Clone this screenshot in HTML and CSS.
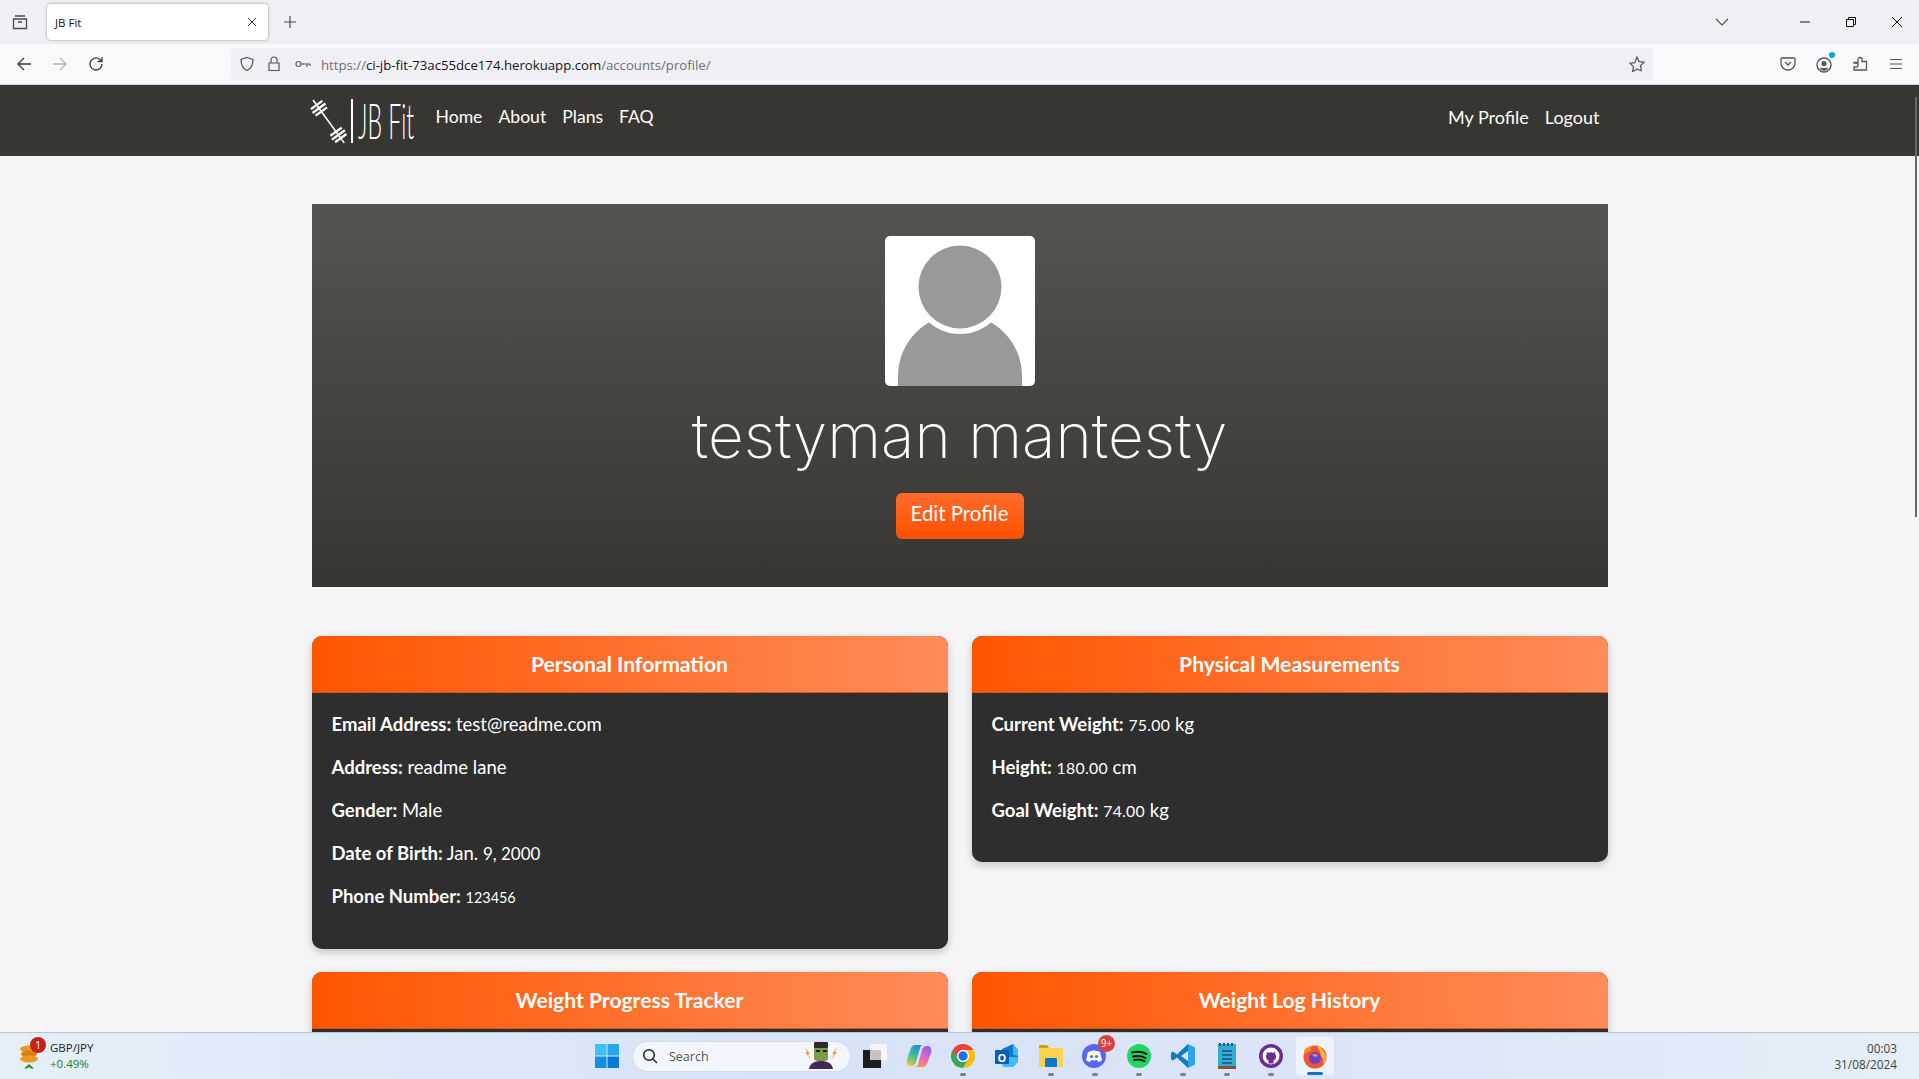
FILE: index.html
```html
<!DOCTYPE html>
<html>
<head>
  <title>JB Fit</title>
  <link rel="stylesheet" href="styles.css">
</head>
<body>
  <!-- Browser tabs -->
  <div class="tabbar">
    <svg class="tab-list" width="16" height="16" viewBox="0 0 16 16" fill="none" stroke="#4a4a4f" stroke-width="1.3"><path d="M3 2h10M1.500 5h13v9.500h-13zM6 8h4"/></svg>
    <div class="tab">
      <span class="tab-title">JB Fit</span>
      <svg width="10" height="10" viewBox="0 0 10 10" stroke="#333" stroke-width="1"><path d="M1 1l8 8M9 1l-8 8"/></svg>
    </div>
    <svg class="tab-new" width="14" height="14" viewBox="0 0 14 14" stroke="#4a4a4f" stroke-width="1.2"><path d="M7 1v12M1 7h12"/></svg>
    <svg class="tab-down" width="14" height="8" viewBox="0 0 14 8" fill="none" stroke="#4a4a4f" stroke-width="1.1"><path d="M1 1l6 6 6-6"/></svg>
    <div class="window-btns">
      <svg width="12" height="12" viewBox="0 0 12 12" stroke="#111" stroke-width="1"><path d="M1 6h10"/></svg>
      <svg width="12" height="12" viewBox="0 0 12 12" fill="none" stroke="#111" stroke-width="1"><path d="M1.500 3.500h7v7h-7zM3.500 3.500v-2h7v7h-2"/></svg>
      <svg width="12" height="12" viewBox="0 0 12 12" stroke="#111" stroke-width="1"><path d="M1 1l10 10M11 1L1 11"/></svg>
    </div>
  </div>

  <!-- Browser toolbar -->
  <div class="toolbar">
    <div class="nav-btns">
      <svg width="16" height="16" viewBox="0 0 16 16" fill="none" stroke="#3a3a3f" stroke-width="1.3"><path d="M15 8H2M8 2L2 8l6 6"/></svg>
      <svg width="16" height="16" viewBox="0 0 16 16" fill="none" stroke="#b4b4b8" stroke-width="1.3"><path d="M1 8h13M8 2l6 6-6 6"/></svg>
      <svg width="16" height="16" viewBox="0 0 16 16" fill="none" stroke="#3a3a3f" stroke-width="1.3"><path d="M14 8a6 6 0 1 1-2-4.500L14 5.500M14 1v4.500H9.500"/></svg>
    </div>
    <div class="urlbar">
      <svg width="16" height="16" viewBox="0 0 16 16" fill="none" stroke="#55555a" stroke-width="1.2"><path d="M8 1.500l6 2c0 5-1.500 9-6 11-4.500-2-6-6-6-11z"/></svg>
      <svg width="14" height="16" viewBox="0 0 14 16" fill="none" stroke="#55555a" stroke-width="1.2"><path d="M2 7h10v7.500H2zM4 7V4a3 3 0 0 1 6 0v3"/></svg>
      <svg class="key" width="16" height="10" viewBox="0 0 16 10" fill="none" stroke="#55555a" stroke-width="1.1"><circle cx="3.500" cy="5" r="2.500"/><path d="M6 5h9M12 5v3M15 5v2"/></svg>
      <span class="url"><span class="url-dim">https://</span>ci-jb-fit-73ac55dce174.herokuapp.com<span class="url-dim">/accounts/profile/</span></span>
      <svg class="star" width="16" height="16" viewBox="0 0 16 16" fill="none" stroke="#55555a" stroke-width="1.2"><path d="M8 1l2.100 4.600 5 .6-3.700 3.400 1 4.900L8 13.100 3.600 15.500l1-4.900L.9 7.200l5-.6z"/></svg>
    </div>
    <div class="tool-icons">
      <svg width="16" height="16" viewBox="0 0 16 16" fill="none" stroke="#55555a" stroke-width="1.3"><path d="M2 2h12a1 1 0 0 1 1 1v4a7 7 0 0 1-14 0V3a1 1 0 0 1 1-1zM5 6l3 3 3-3"/></svg>
      <span class="account-icon">
        <svg width="16" height="16" viewBox="0 0 16 16"><circle cx="8" cy="8" r="7" fill="none" stroke="#55555a" stroke-width="1.400"/><circle cx="8" cy="6.500" r="2.600" fill="#55555a"/><path d="M3.500 11h9a5 5 0 0 1-9 0z" fill="#55555a"/></svg>
        <span class="account-dot"></span>
      </span>
      <svg width="16" height="16" viewBox="0 0 16 16" fill="none" stroke="#55555a" stroke-width="1.3"><path d="M2 7h4V4a2 2 0 0 1 4 0v2h4.500v8.500H2v-3h2a2 2 0 0 0 0-4H2z" transform="translate(0 -.5)"/></svg>
      <svg width="16" height="16" viewBox="0 0 16 16" stroke="#55555a" stroke-width="1.2"><path d="M2 3.500h12M2 8h12M2 12.500h12"/></svg>
    </div>
  </div>

  <div class="page">
    <nav class="site-nav">
      <div class="site-nav-inner">
        <a class="brand" href="#">
          <svg class="brand-logo" width="104" height="50" viewBox="0 0 104 50">
            <g fill="#fff">
              <g transform="translate(1 4) rotate(54)">
                <rect x="0" y="-.8" width="53" height="1.600"/>
                <rect x="5" y="-7" width="2.400" height="14"/>
                <rect x="9" y="-8" width="2.400" height="16"/>
                <rect x="13" y="-7" width="2.400" height="14"/>
                <rect x="38" y="-7" width="2.400" height="14"/>
                <rect x="42" y="-8" width="2.400" height="16"/>
                <rect x="46" y="-7" width="2.400" height="14"/>
              </g>
              <rect x="39" y="3" width="2" height="44"/>
              <text class="brand-text" transform="translate(46 43) scale(.46 1)">JB Fit</text>
            </g>
          </svg>
        </a>
        <ul class="nav-links">
          <li><a href="#">Home</a></li>
          <li><a href="#">About</a></li>
          <li><a href="#">Plans</a></li>
          <li><a href="#">FAQ</a></li>
        </ul>
        <ul class="nav-links nav-right">
          <li><a href="#">My Profile</a></li>
          <li><a href="#">Logout</a></li>
        </ul>
      </div>
    </nav>

    <main class="container">
      <section class="hero">
        <div class="avatar">
          <svg width="150" height="150" viewBox="0 0 150 150">
            <path d="M13 150v-10a62 62 0 0 1 124 0v10z" fill="#999"/>
            <circle cx="75" cy="51" r="47" fill="#fff"/>
            <circle cx="75" cy="51" r="41.500" fill="#999"/>
          </svg>
        </div>
        <h1 class="hero-name">testyman mantesty</h1>
        <a class="edit-btn" href="#">Edit Profile</a>
      </section>

      <div class="cards">
        <section class="card">
          <h2 class="card-head">Personal Information</h2>
          <div class="card-body">
            <p><strong>Email Address:</strong> test@readme.com</p>
            <p><strong>Address:</strong> readme lane</p>
            <p><strong>Gender:</strong> Male</p>
            <p><strong>Date of Birth:</strong> Jan. <span class="num-date">9, 2000</span></p>
            <p><strong>Phone Number:</strong> <span class="num-small">123456</span></p>
          </div>
        </section>
        <section class="card">
          <h2 class="card-head">Physical Measurements</h2>
          <div class="card-body">
            <p><strong>Current Weight:</strong> <span class="num">75.00</span> kg</p>
            <p><strong>Height:</strong> <span class="num">180.00</span> cm</p>
            <p><strong>Goal Weight:</strong> <span class="num">74.00</span> kg</p>
          </div>
        </section>
        <section class="card">
          <h2 class="card-head">Weight Progress Tracker</h2>
          <div class="card-body"></div>
        </section>
        <section class="card">
          <h2 class="card-head">Weight Log History</h2>
          <div class="card-body"></div>
        </section>
      </div>
    </main>
    <div class="scroll-thumb"></div>
  </div>

  <!-- Windows taskbar -->
  <footer class="taskbar">
    <div class="widget">
      <svg width="24" height="30" viewBox="0 0 24 30">
        <ellipse cx="11" cy="8" rx="9" ry="3.500" fill="#e8971c"/>
        <ellipse cx="11" cy="13" rx="8" ry="3.500" fill="#d9800f"/>
        <ellipse cx="11" cy="18" rx="9" ry="3.500" fill="#ee9a1e"/>
        <path d="M11 23l5 4.500h-3L11 26l-2 1.500H6z" fill="#2e8b1e"/>
      </svg>
      <span class="widget-badge">1</span>
      <div class="widget-text">
        <span>GBP/JPY</span>
        <span class="widget-up">+0.49%</span>
      </div>
    </div>

    <div class="task-icons">
      <svg class="win-logo" width="24" height="24" viewBox="0 0 24 24">
        <rect x="0" y="0" width="11.500" height="11.500" fill="#3cc0f5"/>
        <rect x="12.500" y="0" width="11.500" height="11.500" fill="#24a8ea"/>
        <rect x="0" y="12.500" width="11.500" height="11.500" fill="#1290e0"/>
        <rect x="12.500" y="12.500" width="11.500" height="11.500" fill="#0a78d4"/>
      </svg>
      <div class="search-box">
        <svg width="16" height="16" viewBox="0 0 16 16" fill="none" stroke="#222" stroke-width="1.500"><circle cx="7" cy="7" r="5.300"/><path d="M11 11l4 4"/></svg>
        <span class="search-label">Search</span>
        <svg class="search-art" width="38" height="28" viewBox="0 0 38 28">
          <path d="M3 6l5 7-2 0 3 6-6-8h2zM35 6l-5 7 2 0-3 6 6-8h-2z" fill="#f2a52a"/>
          <path d="M7 28c1-6 6-8 12-8s11 2 12 8z" fill="#43265c"/>
          <rect x="12" y="5" width="14" height="15" rx="3" fill="#7c9a48"/>
          <rect x="12" y="1" width="14" height="6" rx="1" fill="#2c2c2c"/>
          <rect x="14" y="9" width="4" height="2" fill="#222"/>
          <rect x="21" y="9" width="4" height="2" fill="#222"/>
        </svg>
      </div>
      <div class="task-icon">
        <svg width="26" height="26" viewBox="0 0 26 26"><rect x="8" y="1" width="17" height="16" fill="#f6f6f6"/><rect x="8" y="7" width="11" height="10" fill="#c4c4c4"/><path d="M1 7h7v10h11v8H1z" fill="#1c1c1c"/></svg>
      </div>
      <div class="task-icon">
        <svg width="26" height="26" viewBox="0 0 26 26">
          <defs>
            <linearGradient id="copilotLeft" x1="0.700" y1="0" x2="0.200" y2="1">
              <stop offset="0" stop-color="#2a86ea"/>
              <stop offset="0.550" stop-color="#3ec48c"/>
              <stop offset="1" stop-color="#f4c63a"/>
            </linearGradient>
            <linearGradient id="copilotRight" x1="0.800" y1="0" x2="0.300" y2="1">
              <stop offset="0" stop-color="#8a62ee"/>
              <stop offset="0.550" stop-color="#e864c4"/>
              <stop offset="1" stop-color="#f59a4a"/>
            </linearGradient>
          </defs>
          <path d="M9 2h8c-1.500 0-2.500 1-3 3l-4 14c-.6 2.400-2.400 4-4.500 4H4c-3 0-4-4-3-7L5 5c1-2 2.500-3 4-3z" fill="url(#copilotLeft)"/>
          <path d="M17 24H9c1.500 0 2.500-1 3-3l4-14c.6-2.400 2.400-4 4.500-4H22c3 0 4 4 3 7l-4 11c-1 2-2.500 3-4 3z" fill="url(#copilotRight)"/>
        </svg>
      </div>
      <div class="task-icon has-dot">
        <svg width="24" height="24" viewBox="0 0 24 24"><path d="M12 6h10.400A12 12 0 0 0 1.600 6l5.200 9A6 6 0 0 1 12 6z" fill="#ea4335"/><path d="M1.600 6A12 12 0 0 0 12 24l5.200-9a6 6 0 0 1-10.400 0z" fill="#34a853"/><path d="M22.400 6A12 12 0 0 1 12 24l5.200-9A6 6 0 0 0 12 6z" fill="#fbbc05"/><circle cx="12" cy="12" r="6" fill="#fff"/><circle cx="12" cy="12" r="4.700" fill="#1a73e8"/></svg>
      </div>
      <div class="task-icon">
        <svg width="26" height="26" viewBox="0 0 26 26"><path d="M8 6l11-5 5 6v11l-5 6H9l-1-5z" fill="#1477c9"/><path d="M19 1l5 6v6l-5-1z" fill="#41b8f0"/><path d="M9 14h15v5l-5 5H9z" fill="#37c0f2"/><rect x="1" y="7" width="14" height="14" rx="1" fill="#0a5fb4"/><text class="outlook-o" x="8" y="18.500">O</text></svg>
      </div>
      <div class="task-icon has-dot">
        <svg width="26" height="24" viewBox="0 0 26 24"><path d="M1 2a1 1 0 0 1 1-1h7l2 3H1z" fill="#d49a18"/><rect x="1" y="4" width="24" height="19" rx="1" fill="#fbd24b"/><rect x="7" y="14" width="12" height="9" rx="1" fill="#0e79c9"/></svg>
      </div>
      <div class="task-icon has-dot">
        <svg width="26" height="26" viewBox="0 0 26 26"><circle cx="12" cy="13" r="12" fill="#5865f2"/><path d="M6 9c4-2 8-2 12 0l2 8c-1 1-3 2-4 2l-1-2c-2 .5-4 .5-6 0l-1 2c-1 0-3-1-4-2z" fill="#fff"/><circle cx="9.500" cy="13.500" r="1.600" fill="#5865f2"/><circle cx="14.500" cy="13.500" r="1.600" fill="#5865f2"/></svg>
        <span class="discord-badge">9+</span>
      </div>
      <div class="task-icon has-dot">
        <svg width="24" height="24" viewBox="0 0 24 24" fill="none"><circle cx="12" cy="12" r="12" fill="#1ed760"/><path d="M5 8.500c5-1.500 10-1 14.500 1.500M6 12.500c4-1 9-.6 12.500 1.500M7 16c3.500-.8 7.500-.5 10.500 1.200" stroke="#111" stroke-width="2" stroke-linecap="round"/></svg>
      </div>
      <div class="task-icon has-dot">
        <svg width="26" height="26" viewBox="0 0 26 26"><path d="M18 1L7 11.500 3 8.500 1 10v6l2 1.500 4-3L18 25v-7l-7-5 7-5z" fill="#0f78c4"/><path d="M18 1l7 3.500v17L18 25z" fill="#2aa3e8"/></svg>
      </div>
      <div class="task-icon has-dot">
        <svg width="20" height="28" viewBox="0 0 20 28"><rect x="1" y="2" width="18" height="22" fill="#35a9d8"/><path d="M2 2.500h16" stroke="#1c5c7f" stroke-width="3" stroke-dasharray="2 2"/><rect x="1" y="24" width="18" height="3" fill="#8a5230"/><path d="M5 9h10M5 13h10M5 17h10M5 21h10" stroke="#0f5578" stroke-width="1.600"/></svg>
      </div>
      <div class="task-icon has-dot">
        <svg width="24" height="24" viewBox="0 0 24 24"><circle cx="12" cy="12" r="12" fill="#6b2d8f"/><circle cx="12" cy="12" r="8.500" fill="#fff"/><path d="M9.500 19.500v-3c-1.500-.6-2.500-2-2.500-4a4 4 0 0 1 .8-2.400V8l2 .8a6 6 0 0 1 4.400 0l2-.8v2.100a4 4 0 0 1 .8 2.400c0 2-1 3.400-2.500 4v3z" fill="#6b2d8f"/></svg>
      </div>
      <div class="task-icon task-active">
        <svg width="26" height="26" viewBox="0 0 26 26"><circle cx="13" cy="14" r="11.500" fill="#f2542d"/><path d="M14 1c5 3 10 8 10 14a11 11 0 0 1-3 7c1-4 0-7-2-9 0-4-3-7-5-12z" fill="#ffb03a"/><path d="M3 6c2-2 5-3 7-3-1 2-2 3-1 5-3 0-5 1-7 4 0-2 0-4 1-6z" fill="#ff8a2e"/><circle cx="13" cy="15" r="6" fill="#6b3fd6"/><path d="M10 12c2-2 5-1 6 1l-3 1z" fill="#ff9a2e"/></svg>
        <span class="active-bar"></span>
      </div>
    </div>

    <div class="clock">
      <span>00:03</span>
      <span>31/08/2024</span>
    </div>
  </footer>
</body>
</html>
```

FILE: styles.css
```css
* {
  box-sizing: border-box;
}

html, body {
  height: 100%;
}

body {
  margin: 0;
  display: flex;
  flex-direction: column;
  overflow: hidden;
  background-color: #f5f5f5;
  font-family: "Lato", "Noto Sans", sans-serif;
  color: #ffffff;
}

/* Browser chrome */
.tabbar {
  height: 44px;
  flex: none;
  display: flex;
  align-items: center;
  background-color: #f0f0f4;
  color: #15141a;
  font-family: "Open Sans", sans-serif;
}

.tab-list {
  margin: 0 13px 0 12px;
}

.tab {
  width: 221px;
  height: 36px;
  margin-left: 6px;
  padding: 0 11px 0 8px;
  display: flex;
  align-items: center;
  justify-content: space-between;
  background-color: #ffffff;
  border-radius: 4px;
  box-shadow: 0 0 3px rgba(0, 0, 0, 0.4);
}

.tab-title {
  font-size: 11.5px;
}

.tab-new {
  margin-left: 15px;
}

.tab-down {
  margin-left: auto;
  margin-right: 70px;
}

.window-btns {
  width: 120px;
  padding-right: 16px;
  display: flex;
  justify-content: space-between;
}

.toolbar {
  height: 41px;
  flex: none;
  display: flex;
  align-items: center;
  background-color: #f9f9fb;
  border-bottom: 1px solid #cfcfd4;
  font-family: "Open Sans", sans-serif;
}

.nav-btns {
  width: 231px;
  padding-left: 16px;
  display: flex;
  gap: 20px;
}

.urlbar {
  width: 1422px;
  height: 32px;
  padding: 0 6px 0 8px;
  display: flex;
  align-items: center;
  gap: 12px;
  background-color: #f0f0f4;
  border-radius: 4px;
}

.key {
  margin-left: 2px;
}

.url {
  margin-top: 2px;
  margin-left: -2px;
  font-size: 13.2px;
  color: #15141a;
}

.url-dim {
  color: #6f6f75;
}

.star {
  margin-left: auto;
  margin-right: 2px;
}

.tool-icons {
  margin-left: 127px;
  display: flex;
  gap: 20px;
  align-items: center;
}

.account-icon {
  position: relative;
  height: 16px;
}

.account-dot {
  position: absolute;
  top: -4px;
  right: -3px;
  width: 6px;
  height: 6px;
  border-radius: 50%;
  background-color: #00a6f0;
}

/* Site */
.page {
  flex: 1;
  min-height: 0;
  position: relative;
  overflow: hidden;
}

.scroll-thumb {
  position: absolute;
  top: 12px;
  right: 2px;
  width: 2px;
  height: 420px;
  background-color: #6a6a6a;
}

.site-nav {
  height: 71px;
  background-color: #383632;
}

.site-nav-inner {
  width: 1296px;
  height: 100%;
  margin: 0 auto;
  display: flex;
  align-items: center;
}

.brand {
  width: 116px;
  height: 50px;
  margin-top: 1px;
}

.brand-logo {
  overflow: visible;
}

.brand-text {
  font-family: "Lato", sans-serif;
  font-size: 50px;
  font-weight: 300;
}

.nav-links {
  list-style: none;
  margin: 0;
  padding: 0;
  display: flex;
}

.nav-links a {
  display: block;
  padding: 0 8px;
  margin-top: -8px;
  color: #ffffff;
  font-size: 17.6px;
  text-decoration: none;
}

.nav-right a {
  font-size: 18px;
}

.nav-right {
  margin-left: auto;
}

.container {
  width: 1296px;
  margin: 48px auto 0;
}

.hero {
  height: 383px;
  padding-top: 32px;
  display: flex;
  flex-direction: column;
  align-items: center;
  background: linear-gradient(#565450, #383632);
}

.avatar {
  width: 150px;
  height: 150px;
  overflow: hidden;
  background-color: #ffffff;
  border-radius: 5px;
}

.avatar svg {
  display: block;
}

.hero-name {
  margin: 11px 0 0;
  font-family: "Inter", sans-serif;
  font-size: 62px;
  font-weight: 250;
  line-height: 78px;
}

.edit-btn {
  width: 128px;
  height: 46px;
  margin-top: 18px;
  display: flex;
  align-items: center;
  justify-content: center;
  padding-bottom: 6px;
  color: #ffffff;
  font-size: 20.4px;
  text-decoration: none;
  background: linear-gradient(#ff6c2c, #ff5000);
  border-radius: 6px;
}

.cards {
  margin-top: 49px;
  display: grid;
  grid-template-columns: 636px 636px;
  gap: 23px 24px;
  align-items: start;
}

.card {
  overflow: hidden;
  background-color: #2e2e2e;
  border-radius: 10px;
  box-shadow: 0 3px 8px rgba(0, 0, 0, 0.2);
}

.card-head {
  height: 57px;
  margin: 0;
  display: flex;
  align-items: center;
  justify-content: center;
  padding-bottom: 2px;
  font-size: 21.1px;
  font-weight: 700;
  background: linear-gradient(90deg, #ff5500, #ff8c5c);
  border-bottom: 1px solid #d9531b;
}

.card-body {
  padding: 18px 20px 22px;
  font-size: 18.5px;
}

.card-body p {
  margin: 0 0 16px;
  line-height: 27px;
}

.num {
  font-size: 15.8px;
  letter-spacing: 0.3px;
}

.num-date {
  font-size: 17px;
}

.num-small {
  font-size: 14.4px;
}

/* Windows taskbar */
.taskbar {
  height: 47px;
  flex: none;
  display: flex;
  align-items: center;
  background: linear-gradient(90deg, #e4eff8, #d7e3f7 40%, #dce5f6 70%, #e4eff8);
  border-top: 1px solid #b9c4cc;
  color: #222;
  font-family: "Open Sans", sans-serif;
}

.widget {
  width: 595px;
  padding-left: 18px;
  position: relative;
  display: flex;
  align-items: center;
  gap: 8px;
}

.widget-badge {
  position: absolute;
  left: 30px;
  top: -3px;
  width: 16px;
  height: 16px;
  border-radius: 50%;
  background-color: #c4201c;
  color: #fff;
  font-size: 10px;
  line-height: 16px;
  text-align: center;
}

.widget-text {
  display: flex;
  flex-direction: column;
  font-size: 11.5px;
  line-height: 16px;
}

.widget-up {
  color: #17801c;
}

.task-icons {
  display: flex;
  align-items: center;
}

.win-logo {
  margin-right: 13px;
}

.search-box {
  width: 219px;
  height: 31px;
  margin-right: 2px;
  padding: 0 10px 0 9px;
  display: flex;
  align-items: center;
  gap: 11px;
  background-color: #f3f6fc;
  border: 1px solid #d5dcea;
  border-radius: 16px;
}

.search-label {
  font-size: 12.5px;
  color: #555;
}

.search-art {
  margin-left: auto;
  margin-bottom: 2px;
}

.task-icon {
  width: 44px;
  height: 46px;
  position: relative;
  display: flex;
  align-items: center;
  justify-content: center;
  padding-bottom: 1px;
}

.has-dot::after {
  content: "";
  position: absolute;
  bottom: 3px;
  left: 19px;
  width: 6px;
  height: 3px;
  border-radius: 2px;
  background-color: #7b8089;
}

.discord-badge {
  position: absolute;
  top: 2px;
  right: 2px;
  width: 17px;
  height: 17px;
  border-radius: 50%;
  background-color: #d9423c;
  color: #fff;
  font-size: 10px;
  line-height: 17px;
  text-align: center;
}

.outlook-o {
  font-family: "Open Sans", sans-serif;
  font-size: 11px;
  font-weight: 700;
  fill: #fff;
  text-anchor: middle;
}

.task-active::before {
  content: "";
  position: absolute;
  top: 4px;
  bottom: 4px;
  left: 3px;
  right: 3px;
  background-color: rgba(255, 255, 255, 0.55);
  border-radius: 4px;
}

.task-active svg {
  position: relative;
}

.active-bar {
  position: absolute;
  bottom: 4px;
  left: 14px;
  width: 16px;
  height: 3px;
  border-radius: 2px;
  background-color: #0f6fd6;
}

.clock {
  margin-left: auto;
  padding-right: 22px;
  display: flex;
  flex-direction: column;
  align-items: flex-end;
  font-size: 11.8px;
  line-height: 16px;
  color: #444;
}
```
